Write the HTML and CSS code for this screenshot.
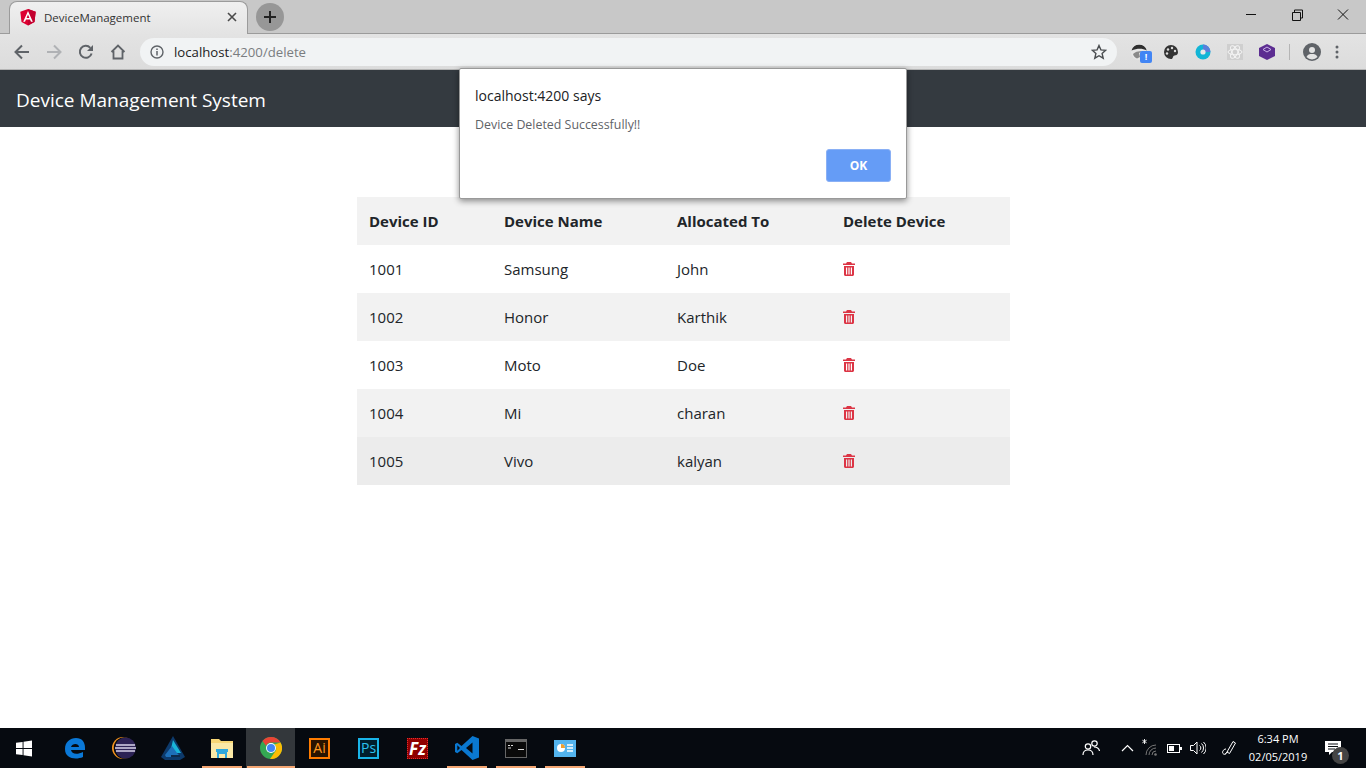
FILE: index.html
```html
<!DOCTYPE html>
<html>
<head>
  <title>DeviceManagement</title>
  <link rel="stylesheet" href="styles.css">
</head>
<body>
  <div class="Screen">
    <div class="TabStrip">
      <div class="Tab">
        <svg class="TabIcon" width="16" height="17" viewBox="0 0 16 17"><path d="M8 0 .3 2.700l1.200 10.200L8 16.600l6.500-3.700 1.200-10.200z" fill="#dd0031"/><path d="M8 0v16.600l6.500-3.700 1.200-10.200z" fill="#c3002f"/><path d="M8 2 3.200 12.800H5l1-2.400h4l1 2.400h1.800zM9.400 9H6.600L8 5.600z" fill="#fff"/></svg>
        <span class="TabTitle">DeviceManagement</span>
        <svg class="TabClose" width="10" height="10" viewBox="0 0 10 10"><path d="M1 1l8 8M9 1 1 9" stroke="#4a4a4a" stroke-width="1.600"/></svg>
      </div>
      <div class="NewTab"><svg width="14" height="14" viewBox="0 0 14 14"><path d="M7 1v12M1 7h12" stroke="#222" stroke-width="2"/></svg></div>
      <div class="WindowBtns">
        <svg width="46" height="30" viewBox="0 0 46 30"><path d="M18 14.500h10" stroke="#111"/></svg>
        <svg width="46" height="30" viewBox="0 0 46 30"><path d="M18.500 12.500h8v8h-8zM20.500 12.500v-2.500h8v8h-2" fill="none" stroke="#111"/></svg>
        <svg width="46" height="30" viewBox="0 0 46 30"><path d="M18 9.500l10 10M28 9.500l-10 10" stroke="#111"/></svg>
      </div>
    </div>

    <div class="Toolbar">
      <svg class="NavIcon" width="16" height="16" viewBox="0 0 16 16"><path d="M15 8H2M8 1.500 1.500 8 8 14.500" fill="none" stroke="#5f6368" stroke-width="2"/></svg>
      <svg class="NavIcon" width="16" height="16" viewBox="0 0 16 16"><path d="M1 8h13M8 1.500 14.500 8 8 14.500" fill="none" stroke="#b0b2b5" stroke-width="2"/></svg>
      <svg class="NavIcon" width="16" height="16" viewBox="0 0 16 16"><path d="M13.600 9.500A6 6 0 1 1 12.300 3.800" fill="none" stroke="#5f6368" stroke-width="2"/><path d="M15 1v6H9z" fill="#5f6368"/></svg>
      <svg class="NavIcon" width="16" height="16" viewBox="0 0 16 16"><path d="M1.500 8 8 1.500 14.500 8M3.500 7v7.500h9V7" fill="none" stroke="#5f6368" stroke-width="1.800"/></svg>
      <div class="Omnibox">
        <svg width="14" height="14" viewBox="0 0 14 14"><circle cx="7" cy="7" r="6" fill="none" stroke="#5f6368" stroke-width="1.400"/><path d="M7 6v4.500M7 3.500v1.500" stroke="#5f6368" stroke-width="1.500"/></svg>
        <span class="Url">localhost<span class="UrlDim">:4200/delete</span></span>
        <svg class="Star" width="16" height="16" viewBox="0 0 16 16"><path d="M8 1.500l1.900 4.400 4.800.4-3.600 3.200 1.100 4.700L8 11.700l-4.200 2.500 1.100-4.700L1.300 6.300l4.800-.4z" fill="none" stroke="#4a4d50" stroke-width="1.400"/></svg>
      </div>
      <div class="Extensions">
        <div class="Ext">
          <svg width="16" height="16" viewBox="0 0 16 16"><circle cx="8" cy="8" r="8" fill="#e6e6e6"/><path d="M.5 6.500A8 8 0 0 1 15.800 6.500C11 4 6 4.500.5 6.500z" fill="#2e2e2e"/><path d="M2 10c3-2.500 6-3 9-2.500l-3 1.500 1 4-3 1.500C4 14 2.500 12 2 10z" fill="#8a8a8a"/></svg>
          <span class="ExtBadge">!</span>
        </div>
        <div class="Ext"><svg width="16" height="16" viewBox="0 0 16 16"><path d="M8 1a7 7 0 1 0 0 14c2 0 1.500-2 2.500-3s4.500 0 4.500-4a7 7 0 0 0-7-7z" fill="#333"/><circle cx="5" cy="5.500" r="1.200" fill="#ddd"/><circle cx="9" cy="4" r="1.200" fill="#ddd"/><circle cx="12" cy="7" r="1.200" fill="#ddd"/><circle cx="4" cy="9.500" r="1.200" fill="#ddd"/></svg></div>
        <div class="Ext"><svg width="16" height="16" viewBox="0 0 16 16"><circle cx="8" cy="8" r="7.500" fill="#12b5d6"/><path d="M8 .5A7.500 7.500 0 0 1 15.500 8H8z" fill="#5b7fdb"/><circle cx="8" cy="8" r="2.600" fill="#e8e8e8"/></svg></div>
        <div class="Ext"><svg width="16" height="16" viewBox="0 0 16 16"><rect width="16" height="16" fill="#cfcfcf"/><g fill="none" stroke="#f4f4f4"><ellipse cx="8" cy="8" rx="7" ry="2.800"/><ellipse cx="8" cy="8" rx="7" ry="2.800" transform="rotate(60 8 8)"/><ellipse cx="8" cy="8" rx="7" ry="2.800" transform="rotate(120 8 8)"/></g></svg></div>
        <div class="Ext"><svg width="16" height="16" viewBox="0 0 16 16"><path d="M8 0l8 4v8l-8 4-8-4V4z" fill="#5c2d91"/><path d="M8 3l4 2.500L8 8 4 5.500z" fill="none" stroke="#c9b3e6"/></svg></div>
      </div>
      <div class="ToolSep"></div>
      <svg class="Profile" width="18" height="18" viewBox="0 0 18 18"><circle cx="9" cy="9" r="9" fill="#5f6368"/><circle cx="9" cy="7" r="3" fill="#e4e4e4"/><path d="M3.500 14c1-2.500 3-3 5.500-3s4.500.5 5.500 3a7.500 7.500 0 0 1-11 0z" fill="#e4e4e4"/></svg>
      <svg class="Menu" width="4" height="14" viewBox="0 0 4 14"><circle cx="2" cy="2" r="1.500" fill="#5f6368"/><circle cx="2" cy="7" r="1.500" fill="#5f6368"/><circle cx="2" cy="12" r="1.500" fill="#5f6368"/></svg>
    </div>

    <div class="Page">
      <nav class="Navbar">Device Management System</nav>
      <div class="Content">
        <table class="DeviceTable">
          <thead>
            <tr><th class="ColId">Device ID</th><th class="ColName">Device Name</th><th class="ColTo">Allocated To</th><th>Delete Device</th></tr>
          </thead>
          <tbody>
            <tr><td>1001</td><td>Samsung</td><td>John</td><td><svg class="Trash" width="12" height="14" viewBox="0 0 12 14"><use href="#trash"/></svg></td></tr>
            <tr><td>1002</td><td>Honor</td><td>Karthik</td><td><svg class="Trash" width="12" height="14" viewBox="0 0 12 14"><use href="#trash"/></svg></td></tr>
            <tr><td>1003</td><td>Moto</td><td>Doe</td><td><svg class="Trash" width="12" height="14" viewBox="0 0 12 14"><use href="#trash"/></svg></td></tr>
            <tr><td>1004</td><td>Mi</td><td>charan</td><td><svg class="Trash" width="12" height="14" viewBox="0 0 12 14"><use href="#trash"/></svg></td></tr>
            <tr class="Hovered"><td>1005</td><td>Vivo</td><td>kalyan</td><td><svg class="Trash" width="12" height="14" viewBox="0 0 12 14"><use href="#trash"/></svg></td></tr>
          </tbody>
        </table>
      </div>
    </div>

    <div class="Taskbar">
      <div class="Task Start"><svg width="16" height="17" viewBox="0 0 17 17"><path d="M0 2.500 7 1.500v6.500H0zM8 1.400 17 0v8H8zM0 9h7v6.500L0 14.500zM8 9h9v8l-9-1.400z" fill="#fff"/></svg></div>
      <div class="Task"><svg width="22" height="22" viewBox="0 0 22 22"><path d="M1 12C1 5 6 1 12 1c6 0 9 4 9 10v2H7c.5 4 6 5 12 2v5c-7 3-18 2-18-8zm6-2h8c0-4-7-4-8 0z" fill="#0a78d7"/></svg></div>
      <div class="Task"><svg width="24" height="22" viewBox="0 0 24 22"><circle cx="11" cy="11" r="11" fill="#f7941e"/><circle cx="12.500" cy="11" r="10.800" fill="#060a10"/><circle cx="13.500" cy="11" r="10.500" fill="#2c2255"/><path d="M4 8h19M3 11h21M4 14h19" stroke="#d8d4ea" stroke-width="1.500"/></svg></div>
      <div class="Task"><svg width="24" height="24" viewBox="0 0 24 24"><path d="M12 0 24 21l-5 3H4l-4-3z" fill="#0d3a6b"/><path d="M12 4 20 17H9z" fill="#19b4d8"/><path d="M4 19l7-9 5 7 3 3v1H5z" fill="#1d6fb8"/><path d="M10 19h9v2h-9z" fill="#0d2a4a"/></svg></div>
      <div class="Task Open"><svg width="22" height="20" viewBox="0 0 22 20"><path d="M0 1h8l2 2h12v17H0z" fill="#f8d775"/><path d="M0 5h22v15H0z" fill="#fbe9a6"/><path d="M6 13h10v7h-2v-4H8v4H6z" fill="#2fa8dc"/><path d="M5 11h12v3H5z" fill="#2fa8dc"/></svg></div>
      <div class="Task Active"><svg width="22" height="22" viewBox="0 0 22 22"><circle cx="11" cy="11" r="11" fill="#34a853"/><path d="M11 0a11 11 0 0 1 9.500 5.500H11a5.500 5.500 0 0 0-5 3.200L2.500 4A11 11 0 0 1 11 0z" fill="#ea4335"/><path d="M20.500 5.500A11 11 0 0 1 10 22l4.500-6.500a5.500 5.500 0 0 0 1-6.500 5 5 0 0 0-1-1.500z" fill="#fbbc05"/><circle cx="11" cy="11" r="5" fill="#fff"/><circle cx="11" cy="11" r="4" fill="#4285f4"/></svg></div>
      <div class="Task"><span class="AppTile AiTile">Ai</span></div>
      <div class="Task"><span class="AppTile PsTile">Ps</span></div>
      <div class="Task"><span class="AppTile FzTile">Fz</span></div>
      <div class="Task Open"><svg width="24" height="24" viewBox="0 0 24 24"><path fill-rule="evenodd" d="M17.500 0 24 2.600v18.800L17.500 24 6.500 13.900 2.300 17.200 0 16.100V7.900l2.300-1.100 4.200 3.300zM17.500 6.500 11 12l6.500 5.500zM2.300 9.300v5.400L5 12z" fill="#0a78d0"/></svg></div>
      <div class="Task Open"><svg width="22" height="19" viewBox="0 0 22 19"><rect width="22" height="19" fill="#666"/><rect x="1" y="3" width="20" height="15" fill="#0a0a0a"/><path d="M3 6.500h2M6 6.500h2M3 9h3M13 10.500h6" stroke="#ddd"/></svg></div>
      <div class="Task Open"><svg width="22" height="17" viewBox="0 0 22 17"><rect width="22" height="17" fill="#53b4ee"/><circle cx="7" cy="8" r="4" fill="#fff"/><path d="M7 8V4a4 4 0 0 1 4 4z" fill="#f0a030"/><path d="M13 5h6M13 8h6M13 11h6" stroke="#fff" stroke-width="1.500"/></svg></div>
      <div class="Tray">
        <svg width="18" height="16" viewBox="0 0 18 16"><g fill="none" stroke="#fff" stroke-width="1.200"><circle cx="12.500" cy="3.500" r="2.700"/><circle cx="6" cy="6.500" r="2.700"/><path d="M1 15c0-3 2-5 5-5s5 2 5 5M12 7c3 0 5 1.500 5.500 4"/></g></svg>
        <svg class="TrayUp" width="13" height="8" viewBox="0 0 13 8"><path d="M1 7l5.500-5.500L12 7" fill="none" stroke="#fff" stroke-width="1.200"/></svg>
        <svg class="TrayWifi" width="16" height="18" viewBox="0 0 16 18"><path d="M2.500 0v5M.4 1.200l4.200 2.600M4.600 1.200.4 3.800" stroke="#fff" stroke-width=".9"/><g fill="none" stroke="#777"><path d="M4 16a10 10 0 0 1 10-10M7 16a7 7 0 0 1 7-7M10 16a4 4 0 0 1 4-4"/></g><circle cx="13.500" cy="15.500" r="1.300" fill="#777"/></svg>
        <svg class="TrayBattery" width="15" height="9" viewBox="0 0 15 9"><rect x=".5" y=".5" width="12" height="8" fill="none" stroke="#fff"/><rect x="2" y="2" width="5" height="5" fill="#fff"/><rect x="13" y="3" width="2" height="3" fill="#fff"/></svg>
        <svg class="TraySound" width="16" height="14" viewBox="0 0 16 14"><path d="M.5 4.500h3L7 1v12L3.500 9.500h-3zM9.500 4.500a3 3 0 0 1 0 5M11.500 2.500a6 6 0 0 1 0 9M13.500 1a8 8 0 0 1 0 12" fill="none" stroke="#fff"/></svg>
        <svg class="TrayPen" width="16" height="16" viewBox="0 0 16 16"><path d="M6 12 12 1.500l2.500 1.500L8.500 13.500zM6 12l-2 2.500M5 9c-3 0-4.500 4-2.500 5s3-1 4.500-3" fill="none" stroke="#fff"/></svg>
        <div class="Clock"><div>6:34 PM</div><div>02/05/2019</div></div>
        <div class="Notify">
          <svg width="16" height="15" viewBox="0 0 16 15"><path d="M0 0h16v11H7l-3 3v-3H0z" fill="#fff"/><path d="M3 3h10M3 5.500h10M3 8h7" stroke="#0a0f14"/></svg>
          <span class="NotifyCount">1</span>
        </div>
      </div>
    </div>

    <div class="Dialog">
      <div class="DialogTitle">localhost:4200 says</div>
      <div class="DialogMsg">Device Deleted Successfully!!</div>
      <div class="DialogActions"><span class="OkBtn">OK</span></div>
    </div>
  </div>

  <svg width="0" height="0" class="Defs"><defs><symbol id="trash" viewBox="0 0 12 14"><path d="M4 0h4l1 1.500h3v1.500H0V1.500h3zM1 4h10v8.500c0 .8-.7 1.500-1.500 1.500h-7C1.700 14 1 13.300 1 12.500zm2 1.500v7h1.200v-7zm2.400 0v7h1.200v-7zm2.400 0v7H9v-7z" fill="#dc3545" fill-rule="evenodd"/></symbol></defs></svg>
</body>
</html>
```

FILE: styles.css
```css
*
{
  margin: 0;
  padding: 0;
  box-sizing: border-box;
}

body
{
  width: 1366px;
  height: 768px;
  overflow: hidden;
  font-family: 'Open Sans', 'Noto Sans', sans-serif;
  background: #fff;
}

.Defs
{
  position: absolute;
}

.Screen
{
  position: relative;
  display: flex;
  flex-direction: column;
  height: 768px;
}

/* browser tabs */
.TabStrip
{
  display: flex;
  align-items: flex-start;
  height: 34px;
  background: #c8c8c8;
  border-bottom: 1px solid #9b9b9b;
}

.Tab
{
  display: flex;
  align-items: center;
  width: 239px;
  height: 34px;
  margin: 1px 0 0 9px;
  padding: 0 10px 3px 10px;
  background: linear-gradient(#f0f0f0, #e3e3e3);
  border: 1px solid #9b9b9b;
  border-bottom: 0;
  border-radius: 8px 8px 0 0;
}

.TabTitle
{
  flex: 1;
  margin-left: 8px;
  font-size: 11.500px;
  color: #333;
}

.NewTab
{
  display: flex;
  align-items: center;
  justify-content: center;
  width: 28px;
  height: 28px;
  margin: 3px 0 0 8px;
  border-radius: 50%;
  background: #979797;
}

.WindowBtns
{
  display: flex;
  margin-left: auto;
}

/* browser toolbar */
.Toolbar
{
  display: flex;
  align-items: center;
  height: 36px;
  padding-left: 14px;
  background: linear-gradient(#e3e3e3, #dcdcdc);
  border-bottom: 1px solid #b5b5b5;
}

.NavIcon
{
  margin-right: 16px;
}

.Omnibox
{
  display: flex;
  align-items: center;
  width: 977px;
  height: 28px;
  margin-left: -2px;
  padding: 0 10px;
  border-radius: 14px;
  background: #f1f3f4;
}

.Url
{
  flex: 1;
  margin-left: 10px;
  font-size: 13.200px;
  color: #222;
}

.UrlDim
{
  color: #7a7d80;
}

.Extensions
{
  display: flex;
  margin-left: 6px;
}

.Ext
{
  position: relative;
  display: flex;
  justify-content: center;
  width: 32px;
}

.ExtBadge
{
  position: absolute;
  left: 17px;
  top: 7px;
  width: 12px;
  height: 12px;
  border-radius: 2px;
  background: #4285f4;
  color: #fff;
  font-size: 9px;
  font-weight: 700;
  line-height: 12px;
  text-align: center;
}

.ToolSep
{
  width: 1px;
  height: 16px;
  margin-left: 6px;
  background: #b5b5b5;
}

.Profile
{
  margin-left: 13px;
}

.Menu
{
  margin-left: 14px;
}

/* the app */
.Page
{
  flex: 1;
  display: flex;
  flex-direction: column;
}

.Navbar
{
  height: 57px;
  padding-left: 16px;
  background: #343a40;
  color: #fff;
  font-size: 19px;
  line-height: 60px;
}

.Content
{
  padding: 70px 0 0 357px;
}

.DeviceTable
{
  width: 653px;
  border-collapse: collapse;
  table-layout: fixed;
  color: #212529;
  font-size: 15px;
}

.DeviceTable th,
.DeviceTable td
{
  height: 48px;
  padding: 0 12px;
  text-align: left;
  vertical-align: middle;
}

.DeviceTable th
{
  font-weight: 700;
  background: #f2f2f2;
}

.ColId
{
  width: 135px;
}

.ColName
{
  width: 173px;
}

.ColTo
{
  width: 166px;
}

.DeviceTable tbody tr:nth-child(even)
{
  background: #f2f2f2;
}

.DeviceTable tbody tr.Hovered
{
  background: #ececec;
}

.Trash
{
  display: block;
}

/* windows taskbar */
.Taskbar
{
  display: flex;
  height: 40px;
  background: #060a10;
}

.Task
{
  position: relative;
  display: flex;
  align-items: center;
  justify-content: center;
  width: 49px;
  height: 40px;
}

.Start
{
  width: 50px;
  padding-right: 2px;
}

.Open::after,
.Active::after
{
  content: "";
  position: absolute;
  left: 5px;
  right: 4px;
  bottom: 0;
  height: 2px;
  background: #f4a673;
}

.Active
{
  background: #33373b;
}

.Active::after
{
  left: 1px;
  right: 0;
}

.AppTile
{
  display: flex;
  align-items: center;
  justify-content: center;
  width: 21px;
  height: 21px;
  font-size: 14px;
  line-height: 1;
}

.AiTile
{
  border: 2px solid #ff7c00;
  background: #2a1400;
  color: #ff9a1f;
}

.PsTile
{
  border: 2px solid #19b4e8;
  background: #001e2e;
  color: #2bc0f0;
}

.FzTile
{
  background: #8f0000;
  border: 1px dotted #e03030;
  color: #fff;
  font-size: 17px;
  font-weight: 700;
  font-style: italic;
}

.Tray
{
  display: flex;
  align-items: center;
  margin-left: auto;
}

.TrayUp
{
  margin-left: 21px;
}

.TrayWifi
{
  margin-left: 8px;
}

.TrayBattery
{
  margin-left: 9px;
}

.TraySound
{
  margin-left: 8px;
}

.TrayPen
{
  margin-left: 15px;
}

.Clock
{
  width: 76px;
  margin-left: 3px;
  color: #fff;
  font-size: 11px;
  line-height: 18px;
  text-align: center;
}

.Notify
{
  position: relative;
  display: flex;
  justify-content: center;
  width: 44px;
  margin-left: 5px;
  margin-right: 1px;
  padding-right: 20px;
}

.NotifyCount
{
  position: absolute;
  left: 11px;
  top: 6px;
  width: 17px;
  height: 17px;
  border-radius: 50%;
  background: #444;
  color: #fff;
  font-size: 11px;
  font-weight: 700;
  line-height: 17px;
  text-align: center;
}

/* alert box */
.Dialog
{
  position: absolute;
  left: 459px;
  top: 68px;
  width: 448px;
  height: 131px;
  padding: 17px 15px 16px 15px;
  background: #fff;
  border: 1px solid #999;
  border-radius: 2px;
  box-shadow: 0 2px 6px rgba(0, 0, 0, 0.45);
}

.DialogTitle
{
  font-size: 14px;
  color: #202124;
}

.DialogMsg
{
  margin-top: 11px;
  font-size: 12.400px;
  color: #5f6368;
}

.DialogActions
{
  display: flex;
  justify-content: flex-end;
  margin-top: 16px;
}

.OkBtn
{
  width: 65px;
  height: 33px;
  background: #659cf6;
  border: 1px solid #8ab0f5;
  border-radius: 3px;
  color: #fff;
  font-size: 12px;
  font-weight: 700;
  line-height: 31px;
  text-align: center;
}
```
